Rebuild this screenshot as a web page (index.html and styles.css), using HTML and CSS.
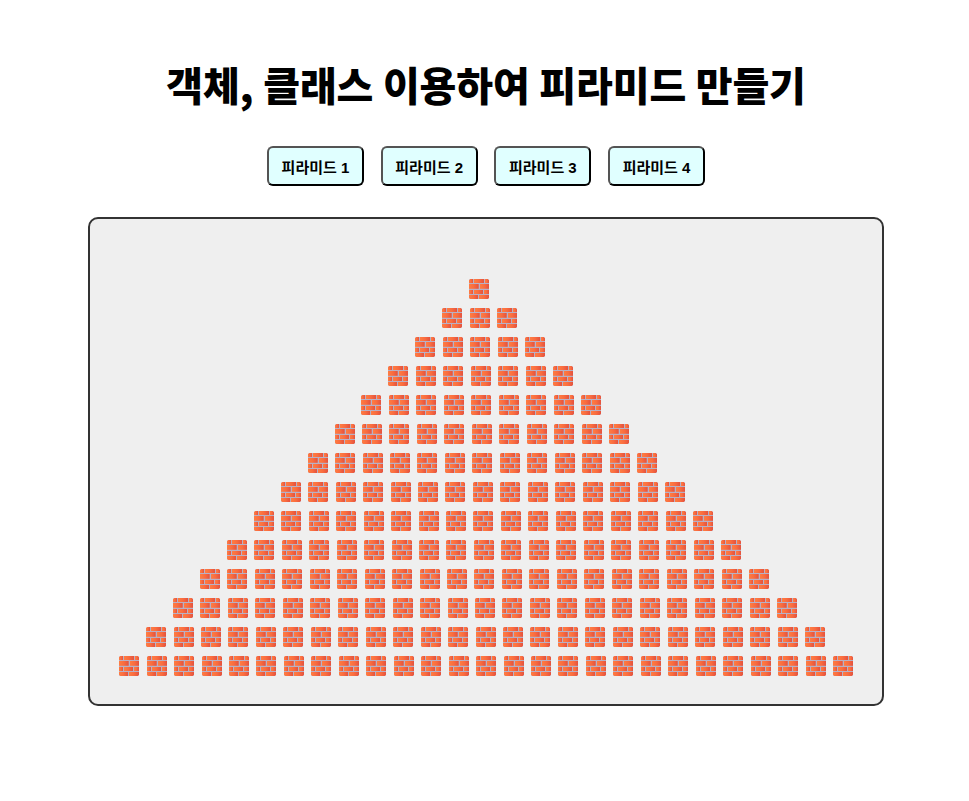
FILE: index.html
```html
<!DOCTYPE html>
<html lang="ko">
<head>
<meta charset="utf-8">
<title>피라미드 만들기</title>
<link rel="stylesheet" href="styles.css">
</head>
<body>
<svg class="defs" aria-hidden="true">
  <defs>
    <linearGradient id="clay" x1="0" x2="1" y1="0" y2="0">
      <stop offset="0" stop-color="#ff7d42"/>
      <stop offset=".5" stop-color="#f96c40"/>
      <stop offset="1" stop-color="#e4523e"/>
    </linearGradient>
    <symbol id="brick" viewBox="0 0 20 20">
      <rect width="20" height="20" rx="1.5" fill="#b9b0c4"/>
      <g fill="url(#clay)">
        <path d="M1.3 0H4V4H0V1.3Z"/>
        <rect x="5" width="10" height="4"/>
        <path d="M16 0H18.7L20 1.3V4H16Z"/>
        <rect y="5" width="9.7" height="4.8"/>
        <rect x="11" y="5" width="9" height="4.8"/>
        <rect y="11" width="4" height="4"/>
        <rect x="5" y="11" width="9" height="4"/>
        <rect x="15" y="11" width="5" height="4"/>
        <path d="M0 16H9V20H1.3L0 18.7Z"/>
        <path d="M10 16H20V18.7L18.7 20H10Z"/>
      </g>
    </symbol>
  </defs>
</svg>
<main>
  <h1>객체, 클래스 이용하여 피라미드 만들기</h1>
  <div class="buttons">
    <button>피라미드 1</button>
    <button>피라미드 2</button>
    <button>피라미드 3</button>
    <button>피라미드 4</button>
  </div>
  <div class="board" id="board"></div>
</main>
<script src="script.js"></script>
</body>
</html>
```
FILE: styles.css
```css
body {
  margin: 0;
  background: #fff;
  font-family: "Liberation Sans", "Noto Sans CJK KR", sans-serif;
}
.defs {
  position: absolute;
  width: 0;
  height: 0;
}
main {
  width: 796px;
  margin-left: 88px;
  padding-top: 54px;
}
h1 {
  margin: 0;
  height: 60px;
  line-height: 60px;
  font-family: "Noto Sans CJK KR", sans-serif;
  font-size: 40px;
  font-weight: 900;
  letter-spacing: -0.1px;
  word-spacing: -1.5px;
  text-align: center;
  white-space: nowrap;
  color: #000;
}
.buttons {
  display: flex;
  justify-content: center;
  gap: 16.7px;
  margin-top: 32px;
}
button {
  width: 97px;
  height: 40px;
  padding: 0;
  border: 2px outset #000;
  border-radius: 6px;
  background: #e0ffff;
  color: #000;
  font-family: inherit;
  font-size: 15px;
  font-weight: 700;
  white-space: nowrap;
}
.board {
  box-sizing: border-box;
  height: 489px;
  margin-top: 31px;
  padding: 60px 0 0 29.2px;
  border: 2px solid #333;
  border-radius: 10px;
  background: #efefef;
}
.row {
  display: flex;
  gap: 7.46px;
  height: 29px;
  padding-left: calc(var(--indent) * 26.92px);
}
.row svg {
  flex: none;
  width: 20px;
  height: 20px;
}
```
FILE: script.js
```js
class Pyramid {
  constructor(floors) {
    this.floors = floors;
  }
  draw(board) {
    const brick = '<svg><use href="#brick"/></svg>';
    for (let i = 0; i < this.floors; i++) {
      const row = document.createElement('div');
      row.className = 'row';
      row.style.setProperty('--indent', this.floors - 1 - i);
      row.innerHTML = brick.repeat(2 * i + 1);
      board.append(row);
    }
  }
}
new Pyramid(14).draw(document.getElementById('board'));
```
